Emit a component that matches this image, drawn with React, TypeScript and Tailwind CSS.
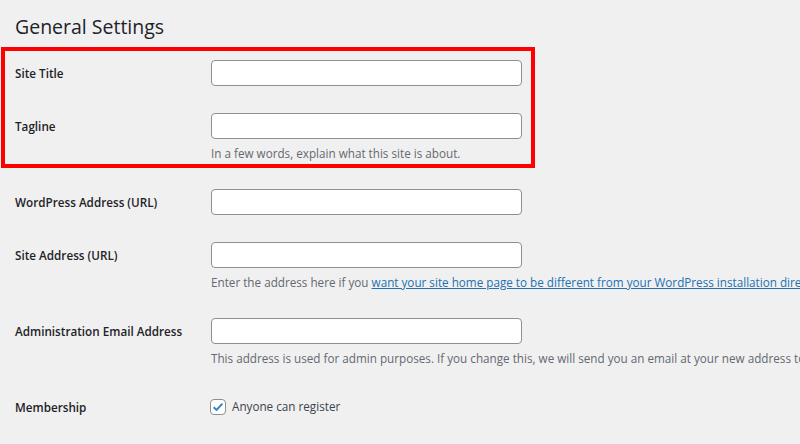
const font = { fontFamily: '"Open Sans", "Noto Sans", sans-serif' };

const TextInput = () => (
  <div className="h-[26px] w-[311px] rounded-[4px] border border-[#8c8f94] bg-white" />
);

const Label = ({ children }: { children: React.ReactNode }) => (
  <div className="flex h-[26px] w-[196px] shrink-0 items-center pt-[2px] text-[11.7px] font-semibold text-[#1d2327]">
    {children}
  </div>
);

const Desc = ({ children }: { children: React.ReactNode }) => (
  <p className="mt-[5px] h-[18px] whitespace-nowrap text-[11.7px] leading-[18px] text-[#646970]">{children}</p>
);

export default function App() {
  return (
    <div className="min-h-screen w-full overflow-hidden bg-[#f0f0f1]" style={font}>
      <h1 className="px-[15px] pt-[12px] text-[19.5px] leading-[29px] text-[#1d2327]">General Settings</h1>

      <div className="ml-[1px] mt-[6px] w-[534px] border-[4px] border-[#ff0000] pl-[10px]">
        <div className="flex pt-[9px] pb-[14px]">
          <Label>Site Title</Label>
          <TextInput />
        </div>
        <div className="flex pt-[13px] pb-[2px]">
          <Label>Tagline</Label>
          <div>
            <TextInput />
            <Desc>In a few words, explain what this site is about.</Desc>
          </div>
        </div>
      </div>

      <div className="pl-[15px]">
        <div className="flex pt-[21px] pb-[14px]">
          <Label>WordPress Address (URL)</Label>
          <TextInput />
        </div>
        <div className="flex pt-[13px] pb-[14px]">
          <Label>Site Address (URL)</Label>
          <div>
            <TextInput />
            <Desc>
              Enter the address here if you{" "}
              <a href="#" className="text-[#2271b1] underline">
                want your site home page to be different from your WordPress installation directory
              </a>
              .
            </Desc>
          </div>
        </div>
        <div className="flex pt-[13px] pb-[14px]">
          <Label>Administration Email Address</Label>
          <div>
            <TextInput />
            <Desc>
              This address is used for admin purposes. If you change this, we will send you an email at your new
              address to confirm it. The new address will not become active until confirmed.
            </Desc>
          </div>
        </div>
        <div className="flex pt-[13px]">
          <Label>Membership</Label>
          <label className="-ml-[1px] flex h-[26px] items-center gap-[6px] text-[11.7px] text-[#3c434a]">
            <span className="flex h-[16px] w-[16px] items-center justify-center rounded-[4px] border border-[#8c8f94] bg-white">
              <svg viewBox="0 0 16 16" className="h-[14px] w-[14px]">
                <path d="M3 8.2 L6.4 11.4 L13 4.2" fill="none" stroke="#3582c4" strokeWidth="2.2" />
              </svg>
            </span>
            Anyone can register
          </label>
        </div>
      </div>
    </div>
  );
}
